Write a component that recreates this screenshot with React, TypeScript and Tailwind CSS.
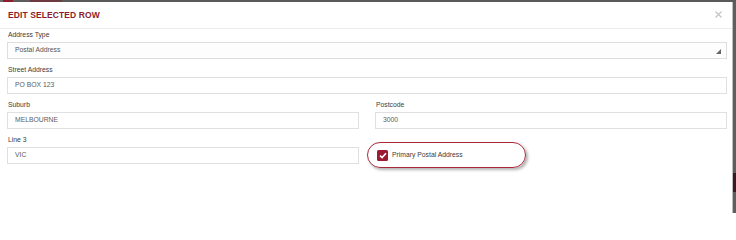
import React from "react";

const font = { fontFamily: '"Liberation Sans", Arial, sans-serif' };

function Label({ children }: { children: React.ReactNode }) {
  return (
    <div className="h-[10px] leading-[10px] text-[6.8px] text-[#3d3d3d] pl-[1px] mb-[2px]">
      {children}
    </div>
  );
}

function Input({ value }: { value: string }) {
  return (
    <div className="h-[17px] border border-[#e0e0e0] bg-white flex items-center pl-[7px] text-[6.8px] text-[#5c5c5c]">
      {value}
    </div>
  );
}

export default function App() {
  return (
    <div className="w-[736px] h-[213px] flex flex-col overflow-hidden bg-[#555]" style={font}>
      <div className="h-[2px] flex shrink-0">
        <div className="w-[3px] bg-[#6a6a6a]" />
        <div className="w-[10px] bg-[#8b1d2c]" />
        <div className="w-[17px] bg-[#5d5d5d]" />
        <div className="w-[32px] bg-[#6e3a42]" />
        <div className="flex-1 bg-[#5a5a5a]" />
      </div>
      <div className="flex flex-1">
        <div className="flex-1 bg-white flex flex-col border-r border-[#bdbdbd]">
          <div className="h-[27px] shrink-0 flex items-center justify-between pl-[8px] pr-[10px] border-b border-[#ececec]">
            <div className="text-[8.5px] font-bold text-[#8b1d2c] tracking-[0.1px]">EDIT SELECTED ROW</div>
            <svg width="7" height="7" viewBox="0 0 7 7" className="mb-[1px]">
              <path d="M0.5 0.5 L6.5 6.5 M6.5 0.5 L0.5 6.5" stroke="#c4c4c4" strokeWidth="1.2" />
            </svg>
          </div>
          <div className="pl-[7px] pr-[5px] pt-[1px] flex flex-col gap-[6px]">
            <div>
              <Label>Address Type</Label>
              <div className="h-[17px] border border-[#dedede] bg-[#fdfdfd] flex items-center justify-between pl-[7px] pr-[5px] text-[6.8px] text-[#555]">
                <span>Postal Address</span>
                <svg width="5" height="5" viewBox="0 0 5 5" className="mt-[2px]">
                  <path d="M5 0 L5 5 L0 5 Z" fill="#666" />
                </svg>
              </div>
            </div>
            <div>
              <Label>Street Address</Label>
              <Input value="PO BOX 123" />
            </div>
            <div className="grid grid-cols-2 gap-x-[16px] gap-y-[6px]">
              <div>
                <Label>Suburb</Label>
                <Input value="MELBOURNE" />
              </div>
              <div>
                <Label>Postcode</Label>
                <Input value="3000" />
              </div>
              <div>
                <Label>Line 3</Label>
                <Input value="VIC" />
              </div>
              <div>
                <div className="-ml-[8px] mt-[7px] w-[159px] h-[26px] rounded-full border-[1.5px] border-[#a8283a] shadow-[2px_2px_3px_rgba(0,0,0,0.3)] flex items-center pl-[9px] gap-[4px]">
                  <div className="w-[11px] h-[11px] rounded-[1.5px] bg-[#9b1b30] flex items-center justify-center">
                    <svg width="8" height="7" viewBox="0 0 8 7">
                      <path d="M1 3.6 L3.1 5.6 L7 1.2" stroke="#fff" strokeWidth="1.6" fill="none" />
                    </svg>
                  </div>
                  <span className="text-[6.8px] text-[#3d3d3d]">Primary Postal Address</span>
                </div>
              </div>
            </div>
          </div>
        </div>
        <div className="w-[3px] flex flex-col">
          <div className="h-[171px] bg-[#5e5e5e]" />
          <div className="h-[19px] bg-[#3a1a20]" />
          <div className="flex-1 bg-[#5e5e5e]" />
        </div>
      </div>
    </div>
  );
}
